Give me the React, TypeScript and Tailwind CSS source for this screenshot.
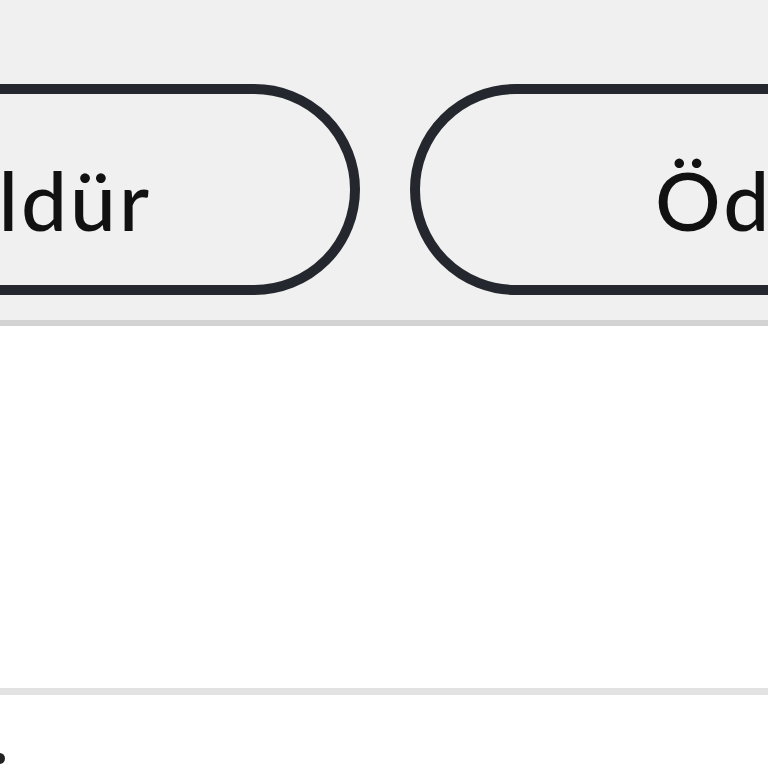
export default function App() {
  return (
    <div className="w-[768px] h-[768px] overflow-hidden bg-white" style={{ fontFamily: "Lato, 'Noto Sans', sans-serif" }}>
      <div className="h-[320px] bg-[#f0f0f0] pt-[84px] flex gap-[50px] -ml-[280px]">
        <div className="shrink-0 w-[640px] h-[211px] rounded-full border-[10px] border-[#24282e] flex items-center justify-end pr-[198px] pt-[18px]">
          <span className="text-[82px] leading-none font-medium text-[#111] tracking-[3px]">Öldür</span>
        </div>
        <div className="shrink-0 w-[640px] h-[211px] rounded-full border-[10px] border-[#24282e] flex items-center justify-start pl-[235px] pt-[18px]">
          <span className="text-[82px] leading-none font-medium text-[#111] tracking-[3px]">Ödül</span>
        </div>
      </div>
      <div className="h-[6px] bg-[#d3d3d3]" />
      <div className="h-[362px] bg-white" />
      <div className="h-[7px] bg-[#e2e2e2]" />
      <div className="h-[73px] bg-white relative">
        <div className="absolute -left-[6px] top-[58px] w-[11px] h-[11px] rounded-full bg-[#222]" />
      </div>
    </div>
  );
}
